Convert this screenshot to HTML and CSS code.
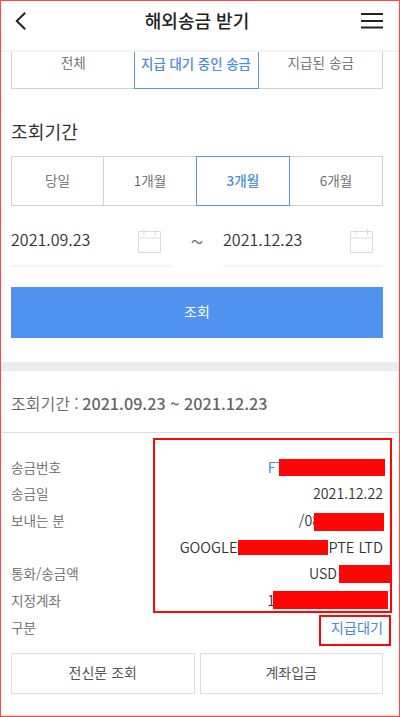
FILE: index.html
```html
<!DOCTYPE html>
<html lang="ko">
<head>
    <meta charset="UTF-8">
    <meta name="viewport" content="width=device-width, initial-scale=1.0">
    <title>해외송금 받기</title>
    <link rel="stylesheet" href="styles.css">
</head>
<body>
    <div class="app">
        <header class="header">
            <svg class="back" width="12" height="20" viewBox="0 0 12 20" fill="none" stroke="#222" stroke-width="2">
                <path d="M10.2 1.7L1.8 10l8.4 8.3"/>
            </svg>
            <h1 class="title">해외송금 받기</h1>
            <svg class="menu" width="22" height="18" viewBox="0 0 22 18" fill="none" stroke="#222" stroke-width="2">
                <path d="M0 2h22M0 9h22M0 15.6h22"/>
            </svg>
        </header>

        <section class="search">
            <div class="tabs status">
                <div class="tab">전체</div>
                <div class="tab active">지급 대기 중인 송금</div>
                <div class="tab">지급된 송금</div>
            </div>
            <h2 class="subtitle">조회기간</h2>
            <div class="tabs period">
                <div class="tab">당일</div>
                <div class="tab">1개월</div>
                <div class="tab active">3개월</div>
                <div class="tab">6개월</div>
            </div>
            <div class="dates">
                <div class="date">
                    <span>2021.09.23</span>
                    <svg width="24" height="25" viewBox="0 0 24 25" fill="none" stroke="#dcdcdc">
                        <path d="M.5 2.5h22v21H.5zM.5 9h22M6 0v6M17.5 0v6"/>
                    </svg>
                </div>
                <span class="wave">~</span>
                <div class="date">
                    <span>2021.12.23</span>
                    <svg width="24" height="25" viewBox="0 0 24 25" fill="none" stroke="#dcdcdc">
                        <path d="M.5 2.5h22v21H.5zM.5 9h22M6 0v6M17.5 0v6"/>
                    </svg>
                </div>
            </div>
            <button class="submit">조회</button>
        </section>

        <section class="result">
            <p class="range">조회기간 : <b>2021.09.23 ~ 2021.12.23</b></p>
            <div class="list">
                <div class="row"><span>송금번호</span><span class="value link">FT<i class="mask number"></i></span></div>
                <div class="row"><span>송금일</span><span class="value">2021.12.22</span></div>
                <div class="row"><span>보내는 분</span><span class="value">/08<i class="mask sender"></i></span></div>
                <div class="row"><span></span><span class="value">GOOGLE<i class="mask company"></i>PTE LTD</span></div>
                <div class="row"><span>통화/송금액</span><span class="value">USD<i class="mask amount"></i></span></div>
                <div class="row"><span>지정계좌</span><span class="value">1<i class="mask account"></i></span></div>
                <div class="row"><span>구분</span><span class="value link state">지급대기</span></div>
                <div class="mark mark-info"></div>
                <div class="mark mark-state"></div>
            </div>
            <div class="buttons">
                <button>전신문 조회</button>
                <button>계좌입금</button>
            </div>
        </section>
    </div>
</body>
</html>
```

FILE: styles.css
```css
* {
    box-sizing: border-box;
}
body {
    margin: 0;
    background-color: #fff;
    color: #666;
    font-family: "Noto Sans CJK KR", sans-serif;
    font-size: 13.6px;
}
.app {
    width: 400px;
    height: 717px;
    border: 1px solid #ff4545;
    overflow: hidden;
}
.header {
    display: flex;
    justify-content: space-between;
    align-items: center;
    height: 51px;
    padding: 0 16px 10px 14px;
    border-bottom: 2px solid #f3f3f3;
}
.title {
    margin: -2px 0 0 6px;
    font-size: 18px;
    font-weight: 500;
    line-height: 38px;
    color: #222;
}
.search {
    height: 310px;
    padding: 0 16px 0 10px;
}
.tabs {
    display: flex;
    border: 1px solid #d2d2d2;
}
.tab {
    flex: 1;
    text-align: center;
    font-weight: 350;
}
.tab.active {
    color: #4a8ee0;
    font-weight: 500;
    border: 1px solid #5b98d8;
    margin: -1px 0;
}
.status {
    height: 37px;
    border-top: 0;
    line-height: 21px;
}
.status .active {
    flex: 0 0 125px;
    margin: 0 1px -1px -1px;
    border-top: 0;
    font-size: 13.4px;
    line-height: 22px;
}
.subtitle {
    margin: 28px 0 10px;
    font-size: 18.2px;
    font-weight: 400;
    line-height: 29px;
    color: #333;
}
.period {
    height: 50px;
    line-height: 46px;
}
.period .tab + .tab:not(.active) {
    border-left: 1px solid #d2d2d2;
}
.period .tab:first-child {
    flex: 0 0 91px;
}
.period .active + .tab {
    border-left: 0 !important;
}
.period .active {
    flex: 0 0 94px;
}
.dates {
    display: flex;
    justify-content: space-between;
    height: 61px;
}
.date {
    display: flex;
    justify-content: space-between;
    width: 160px;
    padding-right: 9px;
    border-bottom: 2px solid #f3f3f3;
    font-size: 16.1px;
    font-weight: 350;
    line-height: 67px;
    color: #333;
}
.date svg {
    margin-top: 23px;
}
.wave {
    font-size: 24px;
    font-weight: 300;
    line-height: 70px;
}
.submit {
    display: block;
    width: 372px;
    height: 51px;
    margin-top: 20px;
    padding: 0 0 3px;
    border: 0;
    background-color: #5092f0;
    color: #fff;
    font-family: inherit;
    font-size: 14px;
    font-weight: 400;
}
.result {
    height: 354px;
    border-top: 9px solid #e9edf0;
    border-bottom: 1px solid #ddd;
}
.range {
    height: 62px;
    margin: 0;
    padding-left: 10px;
    border-bottom: 1px solid #ddd;
    font-size: 16px;
    font-weight: 350;
    line-height: 65px;
}
.range b {
    margin-left: -1px;
    font-size: 16.2px;
    font-weight: 500;
}
.list {
    position: relative;
    padding: 20.6px 16px 0 10px;
}
.row {
    display: flex;
    justify-content: space-between;
    height: 26.67px;
    font-weight: 350;
    line-height: 26.67px;
}
.value {
    display: flex;
    align-items: center;
    font-size: 14.2px;
    color: #333;
}
.link {
    color: #4a88d0;
    font-weight: 400;
}
.mask {
    height: 18px;
    background-color: #ff0505;
}
.number {
    width: 106px;
    height: 17px;
    margin: 2px -2px 0 -5px;
}
.sender {
    width: 70px;
    margin: 3px -1px 0 -6px;
}
.company {
    width: 90px;
    height: 15px;
    margin: 1px 0 0 1px;
}
/* latin sender name is set a little wider */
.row:nth-child(4) .value {
    font-size: 14.6px;
}
.amount {
    width: 52px;
    margin: 1px -8px 0 2px;
}
.account {
    width: 115px;
    margin: -1px -5px 0 -2px;
}
.mark {
    position: absolute;
    border: 2px solid #ff0505;
}
.mark-info {
    top: 5px;
    left: 152px;
    width: 239px;
    height: 175px;
}
.mark-state {
    top: 182px;
    left: 318px;
    width: 72px;
    height: 31px;
}
.buttons {
    display: flex;
    gap: 5px;
    padding: 12.7px 16px 0 10px;
}
.buttons button {
    flex: 1;
    height: 41px;
    padding: 0 0 2px;
    border: 1px solid #ddd;
    background-color: #fff;
    color: #555;
    font-family: inherit;
    font-size: 14px;
    font-weight: 400;
}
```
